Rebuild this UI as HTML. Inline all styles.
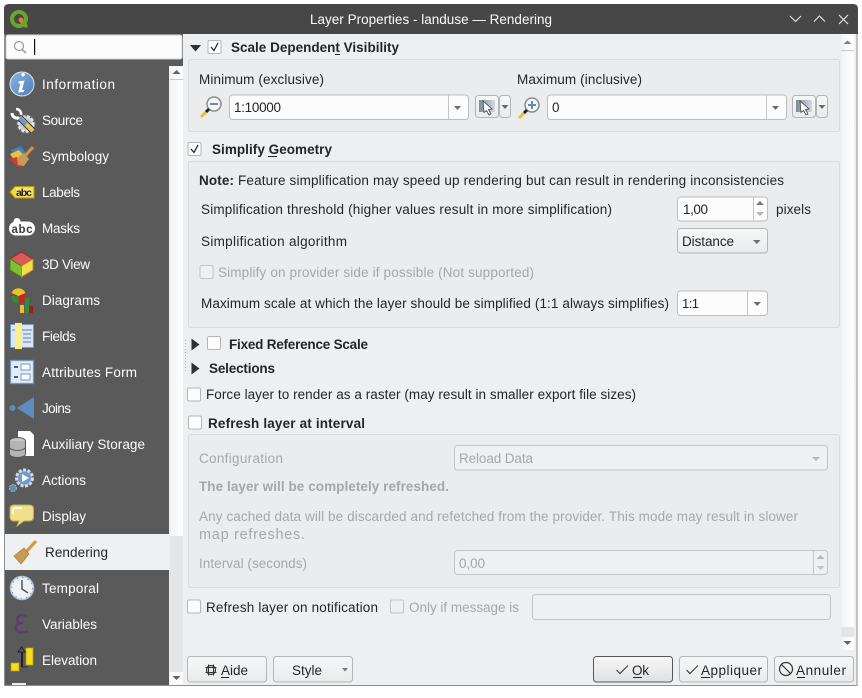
<!DOCTYPE html>
<html><head><meta charset="utf-8"><title>Layer Properties</title>
<style>
html,body{margin:0;padding:0;background:#fff;width:862px;height:698px;overflow:hidden}
svg{display:block;font-family:"Liberation Sans",sans-serif;font-size:13.5px}
.d{fill:#232629}.b{font-weight:bold;fill:#232629}.g{fill:#a6a7a9}.gb{fill:#a6a7a9;font-weight:bold}.s{fill:#fcfcfc}
.c{fill:#fcfcfc;stroke:#bcbdbe}.cd{fill:#eff0f1;stroke:#c3c4c5}.bt{fill:url(#btn);stroke:#b4b5b6}
.sep{stroke:#c4c5c6}.gr{fill:#ebecee;stroke:#dadbdd}.u{stroke:#232629}
</style></head><body>
<svg width="862" height="698" viewBox="0 0 862 698" xmlns="http://www.w3.org/2000/svg">
<defs>
<linearGradient id="btn" x1="0" y1="0" x2="0" y2="1"><stop offset="0" stop-color="#f6f7f7"/><stop offset="1" stop-color="#eaebec"/></linearGradient>
<linearGradient id="ok" x1="0" y1="0" x2="0" y2="1"><stop offset="0" stop-color="#f8f8f8"/><stop offset="1" stop-color="#dfe0e1"/></linearGradient>
<linearGradient id="blue" x1="0" y1="0" x2="1" y2="1"><stop offset="0" stop-color="#8db4de"/><stop offset="1" stop-color="#4a7fbe"/></linearGradient>
<linearGradient id="sb" x1="0" y1="0" x2="1" y2="0"><stop offset="0" stop-color="#f2f3f4"/><stop offset="1" stop-color="#fff"/></linearGradient>
<linearGradient id="sl" x1="0" y1="0" x2="1" y2="0"><stop offset="0" stop-color="#7d8a99"/><stop offset="1" stop-color="#d4d9de"/></linearGradient>
<g id="sel"><rect x="4" y="4" width="16" height="12" fill="url(#sl)"/><path d="M8 5L9 16.500L11.500 14.500L14 19L16 18L13.500 13.500L17 13Z" fill="#fff" stroke="#444" stroke-width=".8"/></g>
<g id="mag"><circle cx="0" cy="0" r="7" fill="#f4f6f8" stroke="#8a8d90" stroke-width="1.500"/><path d="M-5 5L-13 13" stroke="#e8c22e" stroke-width="3"/><path d="M-5 5L-8 8" stroke="#222" stroke-width="3"/></g>
</defs>

<!-- window -->
<path d="M4.500 9Q4.500 4.500 9 4.500H853Q857 4.500 857 9V685.500H4.500Z" fill="#eeeff1" stroke="#8e8f90"/>
<path d="M4 34V9Q4 4 9 4H853Q858 4 858 9V34Z" fill="#474747"/>
<!-- title -->
<circle cx="19" cy="19" r="7" fill="none" stroke="#6ba52f" stroke-width="4"/>
<path d="M21 21L27 27" stroke="#6ba52f" stroke-width="3.500"/><circle cx="21" cy="20" r="2.500" fill="#e8762c"/>
<text x="310" y="24" class="s" textLength="242" lengthAdjust="spacing">Layer Properties - landuse — Rendering</text>
<path d="M790 16L795.500 21.500L801 16M814 21.500L819.500 16L825 21.500M839 15L848 24M848 15L839 24" fill="none" stroke="#e8e8e8" stroke-width="1.100"/>

<!-- sidebar -->
<rect x="5" y="34" width="164" height="651" fill="#5a5a5a"/>
<rect x="169" y="34" width="14" height="32" fill="#5a5a5a"/>
<rect x="6" y="35" width="176" height="24" rx="2" fill="#fcfcfc" stroke="#d0d0d0"/>
<circle cx="19" cy="46" r="4.500" fill="none" stroke="#9a9a9a" stroke-width="1.200"/><path d="M22 49.500L26 53" stroke="#9a9a9a" stroke-width="1.500"/>
<rect x="34" y="39" width="1.200" height="16" fill="#111"/>
<rect x="170" y="66" width="13" height="470" fill="url(#sb)"/>
<rect x="170" y="536" width="13" height="136" fill="#e4e5e6"/>
<rect x="170" y="672" width="13" height="13" fill="#fbfbfb"/>
<path d="M170 79.500H183" stroke="#c8c9ca"/><path d="M172.500 74L176.500 70L180.500 74Z" fill="#5f6163"/><path d="M172.500 676L176.500 680L180.500 676Z" fill="#5f6163"/>
<rect x="5" y="534" width="164" height="36" fill="#eff0f1"/>
<g class="s">
<text x="42" y="89" textLength="73">Information</text>
<text x="42" y="125" textLength="41">Source</text>
<text x="42" y="161" textLength="67">Symbology</text>
<text x="42" y="197" textLength="38">Labels</text>
<text x="42" y="233" textLength="38">Masks</text>
<text x="42" y="269" textLength="48">3D View</text>
<text x="42" y="305" textLength="58">Diagrams</text>
<text x="42" y="341" textLength="34">Fields</text>
<text x="42" y="377" textLength="95">Attributes Form</text>
<text x="42" y="413" textLength="29">Joins</text>
<text x="42" y="449" textLength="103">Auxiliary Storage</text>
<text x="42" y="485" textLength="44">Actions</text>
<text x="42" y="521" textLength="44">Display</text>
<text x="45" y="557" class="d" textLength="63">Rendering</text>
<text x="42" y="593" textLength="57">Temporal</text>
<text x="42" y="629" textLength="55">Variables</text>
<text x="42" y="665" textLength="55">Elevation</text>
</g>
<!-- info -->
<circle cx="22" cy="84" r="12" fill="url(#blue)" stroke="#dbe6f2"/>
<path d="M23 76.500a1.800 1.800 0 1 1 .1 0ZM18.500 81.500L24.500 80.500L22 90H24.500L23.500 92L18 92.500L20.500 83.500H18.500Z" fill="#fff"/>
<!-- source -->
<circle cx="26" cy="124" r="7.500" fill="#c9cbce" stroke="#e4e5e6" stroke-width="3" stroke-dasharray="3 1.500"/>
<circle cx="26" cy="124" r="9" fill="none" stroke="#77797c" stroke-width="1" stroke-dasharray="3 1.500"/>
<path d="M12 113a5 5 0 0 0 6 5L21 120" fill="none" stroke="#fff" stroke-width="3"/><path d="M16 109a5 5 0 0 1 5 6" fill="none" stroke="#fff" stroke-width="2.500"/>
<path d="M20 118L33 131" stroke="#333" stroke-width="6.500"/><path d="M20 118L33 131" stroke="#e9c64a" stroke-width="4.500"/><path d="M19.500 118L26 124.500" stroke="#6b97c9" stroke-width="4"/>
<!-- symbology -->
<path d="M11 150L21 146L28 156L18 160Z" fill="#3f7fc4"/><path d="M10 154L19 150L28 160L17 164Z" fill="#e9c23f"/><path d="M9 159L17 157L24 166L18 167Z" fill="#d13b3b"/>
<path d="M33 147L25 156" stroke="#d9933a" stroke-width="3"/><path d="M17 158L24 153L29 159L24 166L18 165Z" fill="#c89a5a"/>
<!-- labels -->
<path d="M10 192L15 186.500H34V198H15Z" fill="#f5d93a" stroke="#b79b16"/><rect x="16" y="188" width="16.500" height="8.500" fill="#fdf3a0" opacity=".5"/>
<text x="16" y="196" font-size="10.500" font-weight="bold" fill="#222" textLength="16">abc</text>
<!-- masks -->
<rect x="9" y="221.500" width="26" height="14" rx="7" fill="#fff"/><circle cx="17" cy="221.500" r="3.500" fill="#fff"/>
<text x="11.500" y="233" font-size="11.500" font-weight="bold" fill="#3b3d40" textLength="21">abc</text>
<!-- 3d -->
<path d="M21.500 252L33 259L21.500 266L10 259Z" fill="#dd5a5a" stroke="#a22"/>
<path d="M10 259L21.500 266V277L10 270Z" fill="#7ec130" stroke="#4d7d1b"/>
<path d="M33 259L21.500 266V277L33 270Z" fill="#f6dc4a" stroke="#a5902a"/>
<!-- diagrams -->
<circle cx="18.500" cy="296" r="7.500" fill="#c22"/><path d="M18.500 296L11 296A7.500 7.500 0 0 0 18.500 303.500Z" fill="#2a8f3a"/><path d="M18.500 296L11.500 293A7.500 7.500 0 0 1 25.500 293Z" fill="#eec22a"/>
<rect x="20" y="305" width="4" height="8" fill="#f0c020"/><rect x="25" y="298" width="4" height="15" fill="#2a8f3a"/><rect x="29" y="306" width="4" height="7" fill="#a01c1c"/>
<!-- fields -->
<rect x="10.500" y="324.500" width="23" height="23" fill="#dbe6f2" stroke="#6f97c5"/><path d="M12 330H32M23 334H31M23 338H31M23 342H31" stroke="#6f97c5" stroke-width="1.300"/><rect x="15" y="323" width="7" height="26" fill="#f8f08a"/>
<!-- attrs -->
<rect x="10.500" y="360.500" width="23" height="23" fill="#e4ecf5" stroke="#6f97c5" stroke-width="1.300"/><rect x="21" y="364" width="9" height="6" fill="#fff" stroke="#6f97c5"/><rect x="21" y="374" width="9" height="6" fill="#fff" stroke="#6f97c5"/><path d="M14 367H18M14 377H18" stroke="#3e5f85" stroke-width="2"/>
<!-- joins -->
<path d="M34 397V419L17 408Z" fill="#5d8cc0"/><circle cx="12.500" cy="408" r="3" fill="#5d8cc0"/>
<!-- aux -->
<path d="M18 431H30L34 435V456H18Z" fill="#fff"/>
<ellipse cx="17.500" cy="441" rx="8" ry="3.500" fill="#c7c8c9" stroke="#555"/><path d="M9.500 441V454a8 3.500 0 0 0 16 0V441" fill="#b3b4b5" stroke="#555"/><path d="M9.500 447a8 3.500 0 0 0 16 0" fill="none" stroke="#555"/>
<!-- actions -->
<circle cx="24.500" cy="478" r="8" fill="#6d9bd0" stroke="#d8d9da" stroke-width="3" stroke-dasharray="3 1.500"/><path d="M22 474L29 478L22 482Z" fill="#fff"/><circle cx="13" cy="488" r="3.500" fill="#5d8cc0" stroke="#b5b6b7" stroke-dasharray="2 1"/>
<!-- display -->
<path d="M14 505H29Q33.500 505 33.500 509V517Q33.500 521 29 521H24L17 526L19 521H14Q10 521 10 517V509Q10 505 14 505Z" fill="#f0e08c" stroke="#c0ac50"/><path d="M13 514V510Q13 508 16 508H22" stroke="#fff" stroke-width="1.500" fill="none"/>
<!-- rendering -->
<path d="M36 541L26 552" stroke="#d9933a" stroke-width="3"/><path d="M14 556L24 548L29 554L21 564Z" fill="#c89a5a" stroke="#a57a40" stroke-width=".7"/>
<!-- temporal -->
<circle cx="22" cy="588" r="11.500" fill="#eef2f6" stroke="#b9c6d6" stroke-width="1.500"/><path d="M22 580V589L28 593" fill="none" stroke="#555" stroke-width="1.500"/>
<circle cx="22" cy="588" r="10.500" fill="none" stroke="#6f97c5" stroke-width="1.200" stroke-dasharray="1.200 4.300"/>
<!-- variables -->
<path d="M27 616Q22 614 19 616Q15 619 19 623L23 623L18 624Q14 627 17 631Q21 634 28 631" fill="none" stroke="#5d3a75" stroke-width="2.200"/>
<!-- elevation -->
<rect x="26" y="648" width="7" height="17" fill="#f5dc1e" stroke="#b59f10" stroke-width=".7"/><rect x="11" y="663" width="8" height="8" fill="#f5dc1e" stroke="#b59f10" stroke-width=".7"/>
<path d="M21.500 667V652H18L21.500 647L25 652H22.500V667H28" fill="none" stroke="#222" stroke-width="1"/>
<rect x="12" y="683" width="14" height="2" fill="#eee"/>

<!-- right scrollbar -->
<rect x="841" y="34" width="13" height="616" fill="url(#sb)"/>
<rect x="841" y="627" width="13" height="10" fill="#e4e5e6"/>
<path d="M841 50.500H854" stroke="#c8c9ca"/><path d="M843.500 44L847.500 40.500L851.500 44Z" fill="#7b7d80"/><path d="M843.500 641L847.500 645L851.500 641Z" fill="#5f6163"/>
<path d="M185.500 340V371" stroke="#b4b5b6" stroke-dasharray="1 2"/>

<!-- group scale -->
<rect x="188.500" y="59.500" width="651" height="72" rx="2" class="gr"/>
<path d="M190 45H201L195.500 51.500Z" fill="#2e3033"/>
<rect x="208" y="40.500" width="13" height="13" rx="1.500" fill="#fcfcfc" stroke="#b5b6b7"/><path d="M211 47L214 50.500L218 43" fill="none" stroke="#232629" stroke-width="1.300"/>
<text x="231" y="52" class="b" textLength="168">Scale Dependent Visibility</text><path d="M335 54.500H340" class="u"/>
<text x="199" y="84" class="d" textLength="125">Minimum (exclusive)</text>
<text x="517" y="84" class="d" textLength="125">Maximum (inclusive)</text>
<use href="#mag" transform="translate(214,104)"/><path d="M210 104H218" stroke="#5d8cc0" stroke-width="2"/>
<use href="#mag" transform="translate(532,105)"/><path d="M528 105H536M532 101V109" stroke="#5d8cc0" stroke-width="2"/>
<rect x="229.500" y="95" width="239" height="24.500" rx="3" class="c"/><path d="M448.500 95V119" class="sep"/><path d="M454 106H461L457.500 110Z" fill="#6b6c6e"/>
<text x="234" y="112" class="d" textLength="47">1:10000</text>
<rect x="547.500" y="95" width="239" height="24.500" rx="3" class="c"/><path d="M766.500 95V119" class="sep"/><path d="M772 106H779L775.500 110Z" fill="#6b6c6e"/>
<text x="552" y="112" class="d" textLength="7">0</text>
<rect x="475.500" y="95.500" width="23" height="22" rx="3" class="bt"/><rect x="499.500" y="95.500" width="11" height="22" rx="3" class="bt"/><use href="#sel" transform="translate(475,96)"/><path d="M501.500 105H508.500L505 109Z" fill="#6b6c6e"/>
<rect x="792.500" y="95.500" width="23" height="22" rx="3" class="bt"/><rect x="816.500" y="95.500" width="11" height="22" rx="3" class="bt"/><use href="#sel" transform="translate(792,96)"/><path d="M818.500 105H825.500L822 109Z" fill="#6b6c6e"/>

<!-- simplify -->
<rect x="188" y="142.500" width="13" height="13" rx="1.500" fill="#fcfcfc" stroke="#b5b6b7"/><path d="M191 149L194 152.500L198 145" fill="none" stroke="#232629" stroke-width="1.300"/>
<text x="212" y="154" class="b" textLength="120">Simplify Geometry</text><path d="M268 156.500H277" class="u"/>
<rect x="188.500" y="161.500" width="651" height="166" rx="2" class="gr"/>
<text x="199" y="185" class="b" textLength="35">Note:</text>
<text x="238" y="185" class="d" textLength="546">Feature simplification may speed up rendering but can result in rendering inconsistencies</text>
<text x="201" y="214" class="d" textLength="411">Simplification threshold (higher values result in more simplification)</text>
<rect x="677.500" y="197" width="90" height="24" rx="3" class="c"/><path d="M753.500 197V221" class="sep"/><path d="M756 205L760 201L764 205Z" fill="#77797b"/><path d="M756 212L760 216L764 212Z" fill="#b4b5b6"/>
<text x="683" y="214" class="d" textLength="25">1,00</text>
<text x="776" y="214" class="d" textLength="35">pixels</text>
<text x="201" y="246" class="d" textLength="146">Simplification algorithm</text>
<rect x="677.500" y="228.500" width="90" height="24.500" rx="3" class="bt"/><path d="M753 240H760.500L756.800 244Z" fill="#6b6c6e"/>
<text x="682" y="246" class="d" textLength="52">Distance</text>
<rect x="200" y="265.500" width="13" height="13" rx="1.500" fill="#eff0f1" stroke="#c3c4c5"/>
<text x="218" y="277" class="g" textLength="316">Simplify on provider side if possible (Not supported)</text>
<text x="201" y="308" class="d" textLength="468">Maximum scale at which the layer should be simplified (1:1 always simplifies)</text>
<rect x="677.500" y="291" width="90" height="24.500" rx="3" class="c"/><path d="M747.500 291V315" class="sep"/><path d="M753.500 302H761L757.200 306Z" fill="#6b6c6e"/>
<text x="682" y="308" class="d" font-size="13" textLength="17">1:1</text>

<!-- collapsed -->
<path d="M191.500 338.500L199.500 344.500L191.500 350.500Z" fill="#2e3033"/>
<rect x="207.500" y="336.500" width="13" height="13" rx="1.500" fill="#fcfcfc" stroke="#b5b6b7"/>
<text x="229" y="349" class="b" textLength="139">Fixed Reference Scale</text>
<path d="M191.500 362.500L199.500 368.500L191.500 374.500Z" fill="#2e3033"/>
<text x="209" y="373" class="b" textLength="66">Selections</text>
<rect x="187.500" y="388" width="13" height="13" rx="1.500" fill="#fcfcfc" stroke="#b5b6b7"/>
<text x="206" y="399" class="d" textLength="430">Force layer to render as a raster (may result in smaller export file sizes)</text>
<rect x="188.500" y="416" width="13" height="13" rx="1.500" fill="#fcfcfc" stroke="#b5b6b7"/>
<text x="208" y="428" class="b" textLength="157">Refresh layer at interval</text>

<!-- refresh -->
<rect x="188.500" y="434.500" width="651" height="153" rx="2" class="gr"/>
<text x="199" y="463" class="g" textLength="84">Configuration</text>
<rect x="454.500" y="445.500" width="373" height="24.500" rx="3" class="cd"/><path d="M812 457H820L816 461Z" fill="#b4b5b6"/>
<text x="459" y="463" class="g" textLength="74">Reload Data</text>
<text x="199" y="491" class="gb" textLength="250">The layer will be completely refreshed.</text>
<text x="199" y="521" class="g" textLength="599">Any cached data will be discarded and refetched from the provider. This mode may result in slower</text>
<text x="199" y="539" class="g" font-size="14.500" textLength="106">map refreshes.</text>
<text x="199" y="568" class="g" textLength="108">Interval (seconds)</text>
<rect x="454.500" y="550.500" width="373" height="24" rx="3" class="cd"/><path d="M813.500 551V574" class="sep"/><path d="M816.500 559L820.500 555L824.500 559Z" fill="#b4b5b6"/><path d="M816.500 566L820.500 570L824.500 566Z" fill="#c4c5c6"/>
<text x="459" y="568" class="g" textLength="26">0,00</text>

<!-- notification -->
<rect x="187.500" y="600" width="13" height="13" rx="1.500" fill="#fcfcfc" stroke="#b5b6b7"/>
<text x="206" y="612" class="d" textLength="172">Refresh layer on notification</text>
<rect x="390.500" y="600" width="13" height="13" rx="1.500" fill="#eff0f1" stroke="#c3c4c5"/>
<text x="409" y="612" class="g" textLength="110">Only if message is</text>
<rect x="532.500" y="594.500" width="298" height="25" rx="3" class="cd"/>

<!-- buttons -->
<rect x="187.500" y="656.500" width="79" height="25.500" rx="3" class="bt"/>
<circle cx="211" cy="670" r="4.500" fill="#e8e9ea" stroke="#333" stroke-width="1.200"/><path d="M205.500 667.500H216.500M205.500 672.500H216.500M208.500 664.500V675.500M213.500 664.500V675.500" stroke="#333" stroke-width="1"/>
<text x="221" y="675" class="d" textLength="27">Aide</text><path d="M221 677.500H229" class="u"/>
<rect x="273.500" y="656.500" width="79" height="25.500" rx="3" class="bt"/>
<text x="292" y="675" class="d" textLength="30">Style</text><path d="M342 668H348L345 671.500Z" fill="#77797b"/>
<rect x="593.500" y="656.500" width="79" height="25.500" rx="3" fill="url(#ok)" stroke="#55575a"/>
<path d="M616.500 670L620 673.500L628 665.500" fill="none" stroke="#333"/>
<text x="632" y="675" class="d" textLength="17">Ok</text><path d="M633 677.500H642" class="u"/>
<rect x="679.500" y="656.500" width="88" height="25.500" rx="3" class="bt"/>
<path d="M686.500 670L690 673.500L698 665.500" fill="none" stroke="#333"/>
<text x="701" y="675" class="d" textLength="61">Appliquer</text><path d="M701 677.500H710" class="u"/>
<rect x="774.500" y="656.500" width="79" height="25.500" rx="3" class="bt"/>
<circle cx="786" cy="669" r="6.500" fill="none" stroke="#333" stroke-width="1.200"/><path d="M781.500 664.500L790.500 673.500" stroke="#333" stroke-width="1.200"/>
<text x="796" y="675" class="d" textLength="50">Annuler</text><path d="M797 677.500H805" class="u"/>
</svg>
</body></html>
